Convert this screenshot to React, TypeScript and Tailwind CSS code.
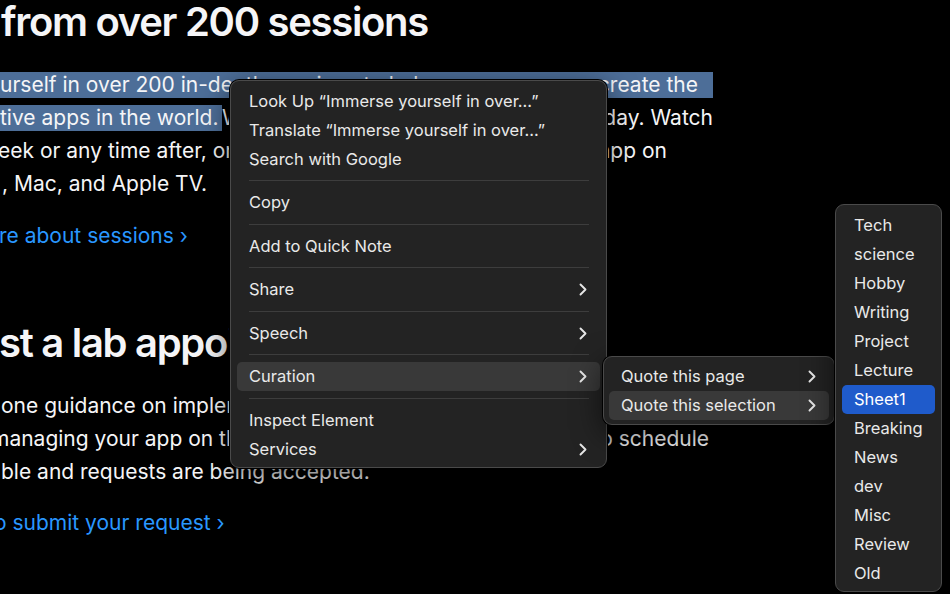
import React from 'react';

const font = { fontFamily: 'Inter, "Liberation Sans", sans-serif' };

function Chevron() {
  return (
    <svg width="8" height="13" viewBox="0 0 8 13" fill="none" className="shrink-0">
      <path d="M1.5 1.5L6.5 6.5L1.5 11.5" stroke="#e6e6e6" strokeWidth="1.9" strokeLinecap="round" strokeLinejoin="round" />
    </svg>
  );
}

function Item({ label, sub, active, blue }: { label: string; sub?: boolean; active?: boolean; blue?: boolean }) {
  return (
    <div
      className={
        'h-[29px] mx-[6px] pl-[12px] pr-[13px] flex items-center justify-between rounded-[5px] ' +
        (active ? 'bg-[#393939]' : '') +
        (blue ? 'bg-[#1f5bcb] text-white' : '')
      }
    >
      <span className="whitespace-nowrap">{label}</span>
      {sub && <Chevron />}
    </div>
  );
}

function Sep() {
  return (
    <div className="h-[14.5px] flex items-center ml-[18px] mr-[17px]">
      <div className="h-px w-full bg-[#3d3d3d]" />
    </div>
  );
}

function App() {
  const tags = ['Tech', 'science', 'Hobby', 'Writing', 'Project', 'Lecture', 'Sheet1', 'Breaking', 'News', 'dev', 'Misc', 'Review', 'Old'];

  return (
    <div className="relative w-[950px] h-[594px] bg-black overflow-hidden text-[#f5f5f7]" style={font}>
      {/* Page content */}
      <div className="flex flex-col">
        <div className="h-[48px] -mt-[2px] ml-[1px] text-[40px] leading-[48px] font-semibold whitespace-nowrap tracking-[-1.3px]">
          from over 200 sessions
        </div>

        <div className="mt-[22px] text-[21px] leading-[33px] whitespace-nowrap">
          <div className="h-[33px] flex items-center">
            <div className="h-[26px] w-[713px] bg-[#4d6e98] flex items-center justify-between pr-[15px]">
              <span>urself in over 200 in-depth sessions to help you</span>
              <span>create the</span>
            </div>
          </div>
          <div className="h-[33px] flex items-center w-[713px] justify-between">
            <span className="flex items-center">
              <span className="h-[26px] flex items-center bg-[#4d6e98] w-[222px]">tive apps in the world.</span>
              <span>Watch the sessions</span>
            </span>
            <span>today. Watch</span>
          </div>
          <div className="h-[33px] flex items-center w-[667px] justify-between">
            <span className="-ml-[2px]">eek or any time after, online or in the Developer</span>
            <span>app on</span>
          </div>
          <div className="h-[33px] ml-[2px]">, Mac, and Apple TV.</div>
        </div>

        <div className="mt-[19px] h-[33px] text-[21px] leading-[33px] text-[#2997ff] whitespace-nowrap -ml-[1px]">
          re about sessions ›
        </div>

        <div className="mt-[67px] h-[48px] -ml-[1px] text-[40px] leading-[48px] font-semibold whitespace-nowrap tracking-[-1.3px]">
          st a lab appointment
        </div>

        <div className="mt-[22px] text-[21px] leading-[33px] whitespace-nowrap">
          <div className="h-[33px] ml-[1px]">one guidance on implementing the latest technologies</div>
          <div className="h-[33px] flex w-[709px] justify-between">
            <span className="-ml-[9px]">managing your app on the App Store. Labs are open to</span>
            <span>to schedule</span>
          </div>
          <div className="h-[33px] ml-[1px]">ble and requests are being accepted.</div>
        </div>

        <div className="mt-[18px] h-[33px] text-[21px] leading-[33px] text-[#2997ff] whitespace-nowrap -ml-[6px]">
          o submit your request ›
        </div>
      </div>

      {/* Main context menu */}
      <div className="absolute left-[230px] top-[80px] w-[377px] h-[388px] rounded-[9px] bg-[#232323] border border-[#4a4a4a] ring-1 ring-black shadow-[0_8px_30px_rgba(0,0,0,0.6)] pt-[5.5px] text-[16.5px] text-[#e9e9e9]">
        <Item label="Look Up “Immerse yourself in over...”" />
        <Item label="Translate “Immerse yourself in over...”" />
        <Item label="Search with Google" />
        <Sep />
        <Item label="Copy" />
        <Sep />
        <Item label="Add to Quick Note" />
        <Sep />
        <Item label="Share" sub />
        <Sep />
        <Item label="Speech" sub />
        <Sep />
        <Item label="Curation" sub active />
        <Sep />
        <Item label="Inspect Element" />
        <Item label="Services" sub />
      </div>

      {/* Curation submenu */}
      <div className="absolute left-[603px] top-[356px] w-[232px] h-[69px] rounded-[9px] bg-[#232323] border border-[#4a4a4a] ring-1 ring-black shadow-[0_8px_30px_rgba(0,0,0,0.6)] pt-[5px] text-[16.5px] text-[#e9e9e9]">
        <div className="-mx-px">
          <Item label="Quote this page" sub />
          <Item label="Quote this selection" sub active />
        </div>
      </div>

      {/* Tags submenu */}
      <div className="absolute left-[835px] top-[204px] w-[107px] h-[388px] rounded-[9px] bg-[#232323] border border-[#4a4a4a] ring-1 ring-black shadow-[0_8px_30px_rgba(0,0,0,0.6)] pt-[5.5px] text-[16.5px] text-[#e9e9e9]">
        {tags.map((t) => (
          <Item key={t} label={t} blue={t === 'Sheet1'} />
        ))}
      </div>
    </div>
  );
}

export default App;
